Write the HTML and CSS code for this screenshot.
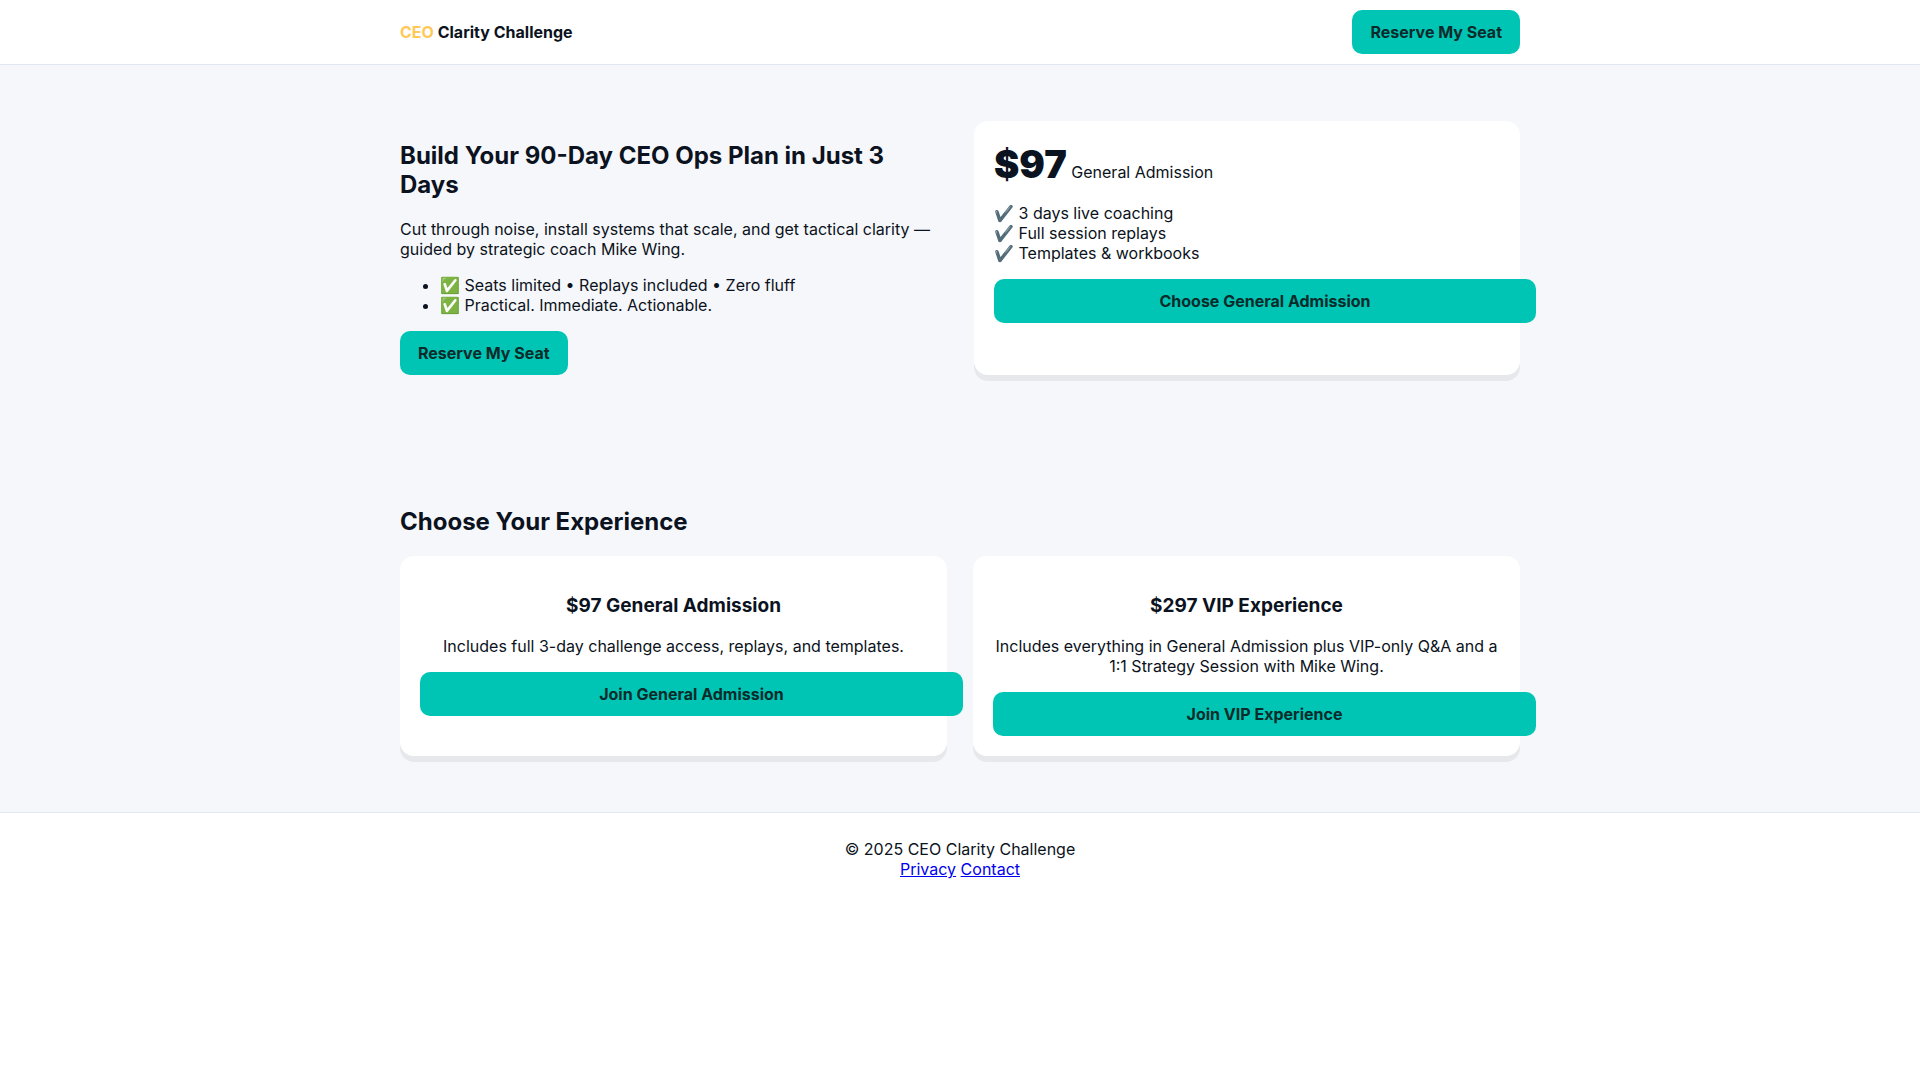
FILE: index.html
```html
<!DOCTYPE html>
<html lang="en">
<head>
  <meta charset="UTF-8">
  <meta name="viewport" content="width=device-width, initial-scale=1">
  <title>CEO Clarity Challenge</title>
  <link rel="stylesheet" href="styles.css">
</head>
<body>

  <header>
    <div class="wrap nav">
      <div class="brand"><span>CEO</span> Clarity Challenge</div>
      <a class="btn" href="#tickets">Reserve My Seat</a>
    </div>
  </header>

  <section>
    <div class="wrap hero">
      <div>
        <h1>Build Your 90-Day CEO Ops Plan in Just 3 Days</h1>
        <p>Cut through noise, install systems that scale, and get tactical clarity — guided by strategic coach Mike Wing.</p>
        <ul>
          <li>✅ Seats limited • Replays included • Zero fluff</li>
          <li>✅ Practical. Immediate. Actionable.</li>
        </ul>
        <a class="btn" href="#tickets">Reserve My Seat</a>
      </div>
      <div class="card">
        <div><span class="price">$97</span> General Admission</div>
        <ul class="checks">
          <li>✔️ 3 days live coaching</li>
          <li>✔️ Full session replays</li>
          <li>✔️ Templates &amp; workbooks</li>
        </ul>
        <a class="btn full" href="#tickets">Choose General Admission</a>
      </div>
    </div>
  </section>

  <section id="tickets">
    <div class="wrap">
      <h2>Choose Your Experience</h2>
      <div class="grid">
        <div class="card center">
          <h3>$97 General Admission</h3>
          <p>Includes full 3-day challenge access, replays, and templates.</p>
          <a class="btn full" href="#">Join General Admission</a>
        </div>
        <div class="card center">
          <h3>$297 VIP Experience</h3>
          <p>Includes everything in General Admission plus VIP-only Q&amp;A and a 1:1 Strategy Session with Mike Wing.</p>
          <a class="btn full" href="#">Join VIP Experience</a>
        </div>
      </div>
    </div>
  </section>

  <footer>
    <div>© 2025 CEO Clarity Challenge</div>
    <div><a href="#">Privacy</a> <a href="#">Contact</a></div>
  </footer>

</body>
</html>
```

FILE: styles.css
```css
body {
  margin: 0;
  font-family: Inter, "Liberation Sans", sans-serif;
  line-height: 20px;
  color: #0b1220;
  background: #fff;
}
.wrap {
  max-width: 1120px;
  margin: 0 auto;
  padding: 0 20px;
}

header {
  border-bottom: 1px solid #e2e8f0;
}
.nav {
  display: flex;
  justify-content: space-between;
  align-items: center;
  height: 64px;
}
.brand {
  font-weight: 700;
}
.brand span {
  color: #ffc857;
}

section {
  padding: 56px 0;
  background: #f6f7fb;
}
h1, h2 {
  font-size: 24px;
  line-height: 29px;
  margin: 20px 0;
}
h3 {
  font-size: 19px;
  line-height: 22px;
  margin: 19px 0;
}
.hero {
  display: grid;
  grid-template-columns: 1fr 1fr;
  gap: 28px;
}
.grid {
  display: grid;
  grid-template-columns: 1fr 1fr;
  gap: 26px;
}

.btn {
  display: inline-block;
  padding: 12px 18px;
  border-radius: 10px;
  background: #00c4b4;
  color: #0b2b2a;
  font-weight: 700;
  text-decoration: none;
}
/* padding adds to the full width */
.full {
  width: 100%;
  text-align: center;
}
.card {
  padding: 20px;
  border-radius: 14px;
  background: #fff;
  box-shadow: 0 6px 0 rgba(0, 0, 0, 0.06);
}
.center {
  text-align: center;
}
.price {
  font-size: 38px;
  line-height: 46px;
  font-weight: 900;
}
.checks {
  list-style: none;
  padding: 0;
}

footer {
  padding: 26px 20px;
  border-top: 1px solid #e2e8f0;
  text-align: center;
}

@media (max-width: 800px) {
  .hero, .grid {
    grid-template-columns: 1fr;
  }
}
```
